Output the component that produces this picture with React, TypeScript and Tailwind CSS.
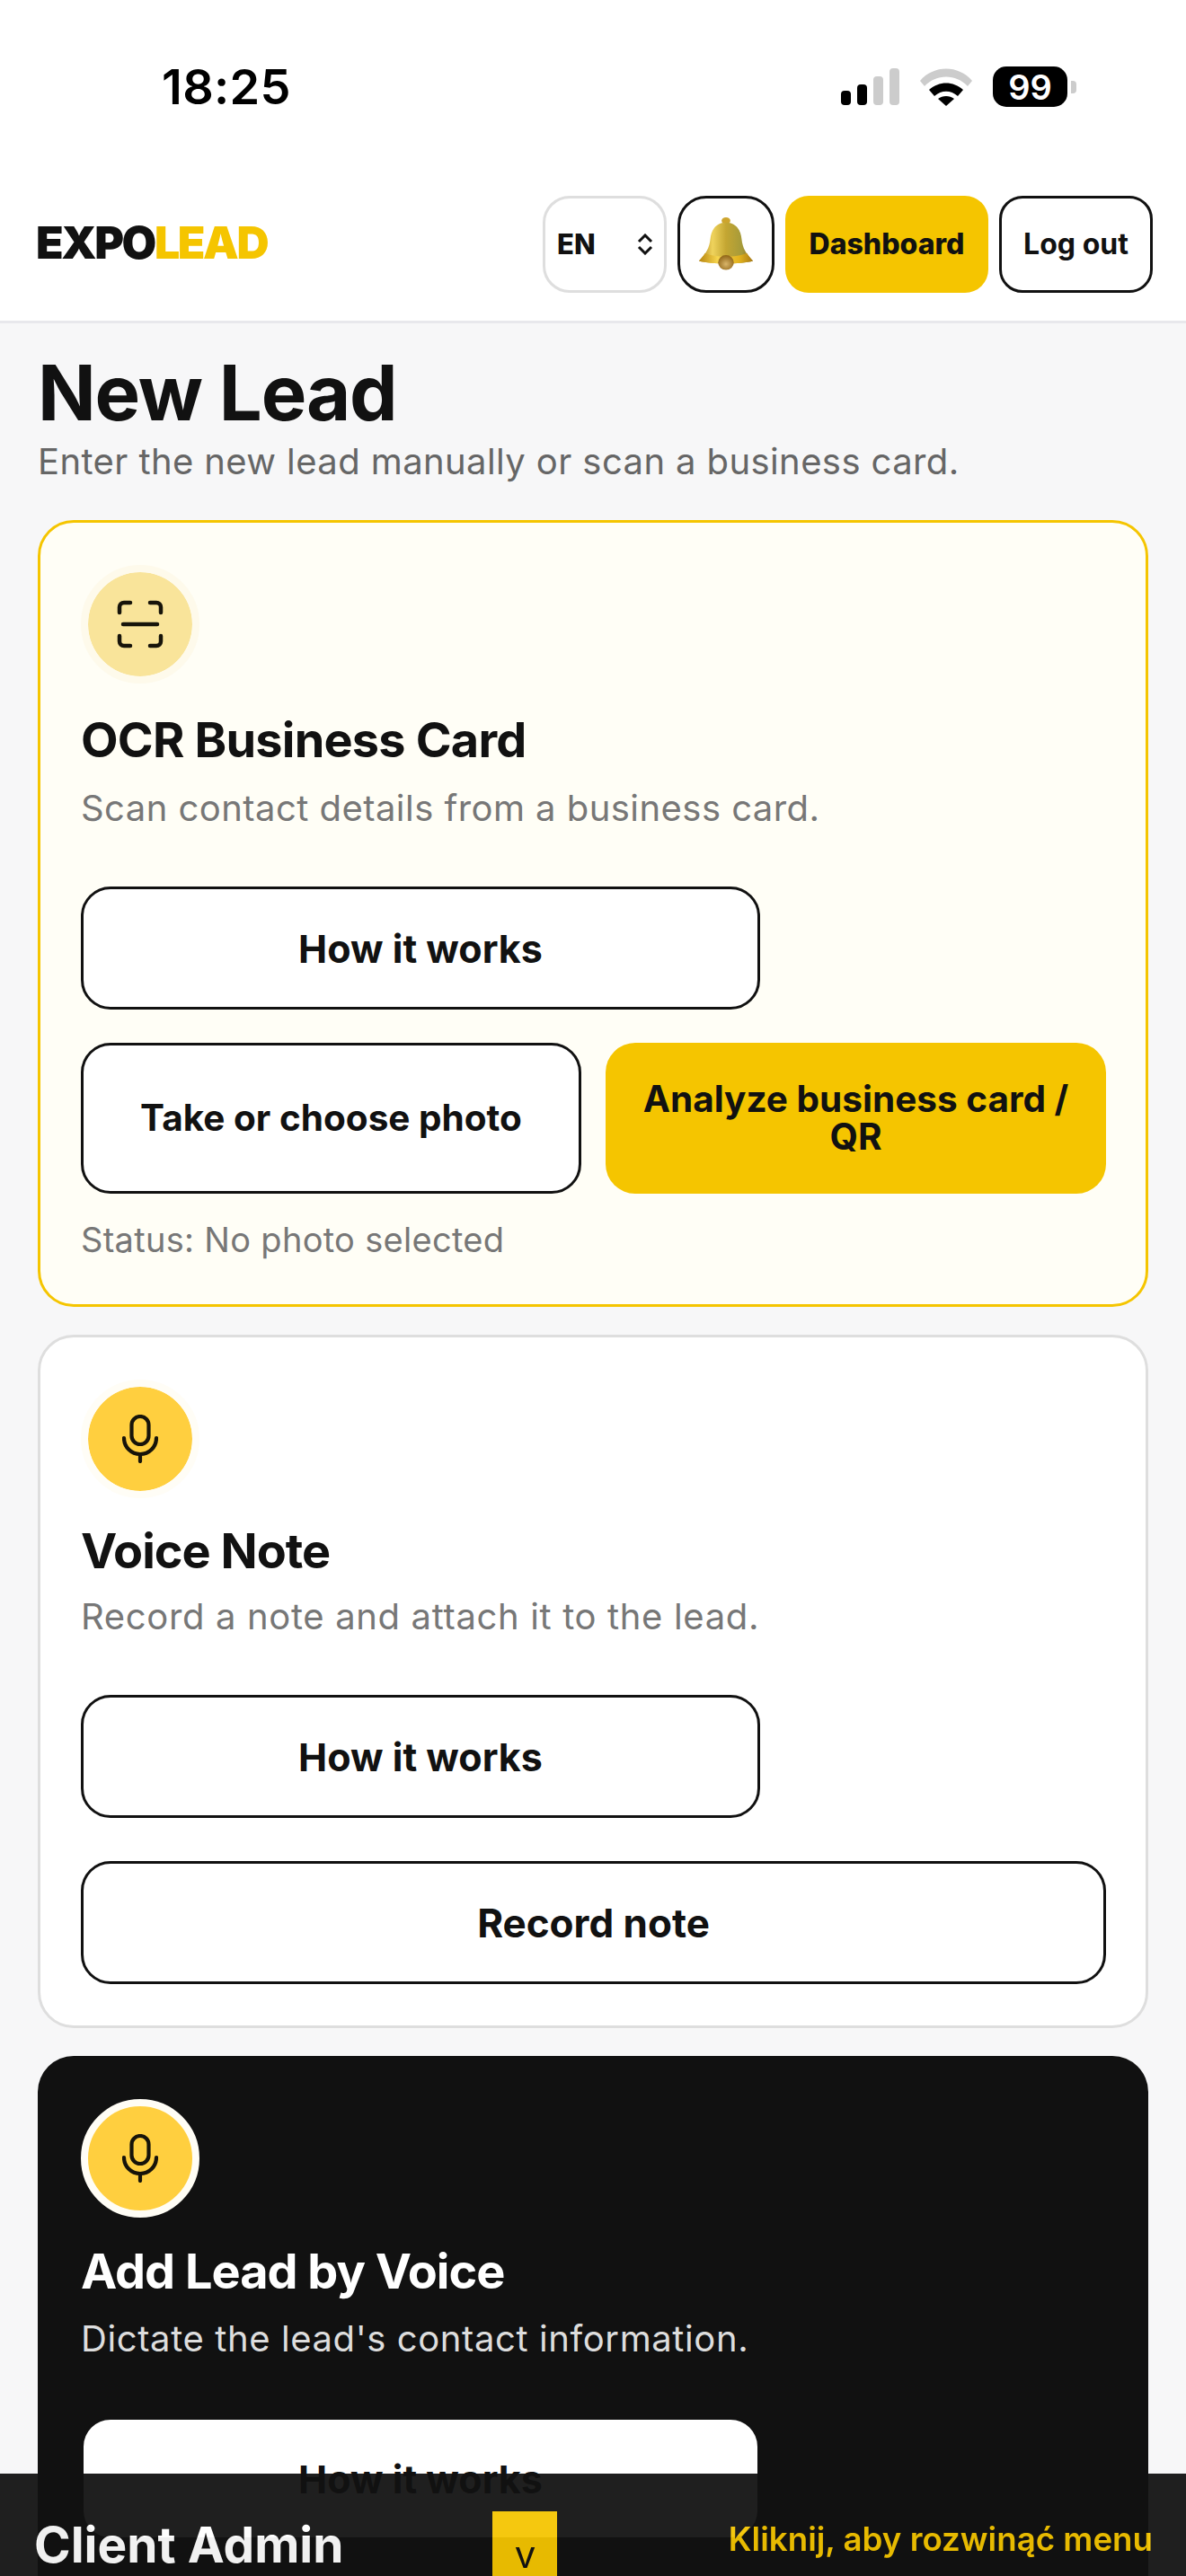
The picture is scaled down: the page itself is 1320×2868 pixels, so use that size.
import React from "react";

const ScanIcon = () => (
  <svg width="52" height="54" viewBox="0 0 52 54" fill="none" stroke="#17140a" strokeWidth="4.5" strokeLinecap="round">
    <path d="M3 14V8a5 5 0 0 1 5-5h7" />
    <path d="M37 3h7a5 5 0 0 1 5 5v6" />
    <path d="M7 27h38" />
    <path d="M3 40v6a5 5 0 0 0 5 5h7" />
    <path d="M49 40v6a5 5 0 0 1-5 5h-7" />
  </svg>
);

const MicIcon = () => (
  <svg width="40" height="54" viewBox="0 0 40 54" fill="none" stroke="#17140a" strokeWidth="4.2" strokeLinecap="round">
    <rect x="10.5" y="2" width="19" height="31" rx="9.5" />
    <path d="M2 26a18 18 0 0 0 36 0" />
    <path d="M20 44v8" />
  </svg>
);

const BellIcon = () => (
  <svg width="62" height="62" viewBox="0 0 64 64">
    <defs>
      <linearGradient id="bellBody" x1="0" y1="0" x2="1" y2="0">
        <stop offset="0" stopColor="#a87c14" />
        <stop offset="0.25" stopColor="#efd35c" />
        <stop offset="0.5" stopColor="#c4a632" />
        <stop offset="0.8" stopColor="#a59a3a" />
        <stop offset="1" stopColor="#86661a" />
      </linearGradient>
      <linearGradient id="bellRim" x1="0" y1="0" x2="1" y2="0">
        <stop offset="0" stopColor="#b8860f" />
        <stop offset="0.35" stopColor="#f7d64e" />
        <stop offset="0.75" stopColor="#e2b21e" />
        <stop offset="1" stopColor="#a87a14" />
      </linearGradient>
      <radialGradient id="bellClapper" cx="0.5" cy="0.6" r="0.6">
        <stop offset="0" stopColor="#d9b56a" />
        <stop offset="1" stopColor="#8f6415" />
      </radialGradient>
    </defs>
    <ellipse cx="32" cy="5" rx="5" ry="4" fill="#cda52e" />
    <path d="M32 7C21 7 15 15 14 26c-1 10-5 17-13 25 7 2 19 3 31 3s24-1 31-3c-8-8-12-15-13-25C49 15 43 7 32 7z" fill="url(#bellBody)" />
    <path d="M1 51c7 2 19 3 31 3s24-1 31-3c-3-3-5-6-7-9-6 3-15 4-24 4s-18-1-24-4c-2 3-4 6-7 9z" fill="url(#bellRim)" />
    <ellipse cx="32" cy="53" rx="9" ry="8.5" fill="url(#bellClapper)" />
  </svg>
);

const SignalIcon = () => (
  <div className="flex items-end gap-[7px]">
    <div className="h-[16px] w-[11px] rounded-[4px] bg-black" />
    <div className="h-[23px] w-[11px] rounded-[4px] bg-black" />
    <div className="h-[32px] w-[11px] rounded-[4px] bg-[#cccccc]" />
    <div className="h-[41px] w-[11px] rounded-[4px] bg-[#cccccc]" />
  </div>
);

const WifiIcon = () => (
  <svg width="58" height="42" viewBox="0 0 58 42">
    <path d="M0 14C15 -4 43 -4 58 14l-5 6C40 6 18 6 5 20z" fill="#cccccc" />
    <path d="M10 24c11-10 27-10 38 0l-6 7c-8-7-18-7-26 0z" fill="#000" />
    <path d="M20 34c5-4 13-4 18 0l-9 8z" fill="#000" />
  </svg>
);

const Outline = "border-[3px] border-[#111111] bg-white text-[#111111]";

function ActionButton({ label, className = "" }: { label: string; className?: string }) {
  return (
    <button className={`flex items-center justify-center rounded-[33px] leading-[50px] font-bold ${className}`}>
      {label}
    </button>
  );
}

export default function App() {
  return (
    <div className="h-[2868px] overflow-hidden bg-[#f7f7f8] font-['Inter',sans-serif] text-[#111111]">
      <div className="flex h-[200px] items-start justify-between bg-white pt-[64px] pr-[122px] pl-[180px]">
        <span className="text-[54px] leading-[66px] font-semibold tracking-[0.3px] text-black">18:25</span>
        <div className="flex items-center pt-[10px]">
          <SignalIcon />
          <div className="mr-[23px] ml-[23px]">
            <WifiIcon />
          </div>
          <div className="flex h-[45px] w-[83px] items-center justify-center rounded-[15px] bg-black text-[38px] leading-none font-semibold text-white">
            99
          </div>
          <div className="ml-[4px] h-[14px] w-[6px] rounded-r-[4px] bg-[#cccccc]" />
        </div>
      </div>

      <header className="flex h-[160px] items-start justify-between border-b-[3px] border-[#e8e8ec] bg-white pt-[18px] pr-[37px] pl-[40px]">
        <div className="mt-[24px] text-[50px] leading-[56px] font-black tracking-[-2.4px]">
          EXPO<span className="text-[#f5c500]">LEAD</span>
        </div>
        <div className="flex items-center gap-[12px]">
          <div className="flex h-[108px] w-[138px] items-center justify-between rounded-[30px] border-[3px] border-[#dedede] bg-white pr-[12px] pl-[13px] text-[31px] font-extrabold">
            EN
            <svg width="18" height="24" viewBox="0 0 18 24" fill="none" stroke="#111" strokeWidth="3">
              <path d="M2 9l7-7 7 7" />
              <path d="M2 15l7 7 7-7" />
            </svg>
          </div>
          <button className={`flex h-[108px] w-[108px] items-center justify-center rounded-[32px] ${Outline}`}>
            <BellIcon />
          </button>
          <button className="h-[108px] w-[226px] rounded-[26px] bg-[#f5c500] text-[32px] font-extrabold">Dashboard</button>
          <button className={`h-[108px] w-[171px] rounded-[26px] text-[32px] font-bold ${Outline}`}>Log out</button>
        </div>
      </header>

      <main className="px-[42px]">
        <h1 className="mt-[28px] text-[85px] leading-[100px] font-bold tracking-[-1.2px]">New Lead</h1>
        <p className="mt-[2px] text-[40px] leading-[48px] tracking-[0.4px] text-[#666666]">Enter the new lead manually or scan a business card.</p>

        <section className="mt-[41px] h-[876px] rounded-[40px] border-[3px] border-[#f5c500] bg-[#fffef6] pt-[47px] pr-[44px] pl-[45px]">
          <div className="flex h-[132px] w-[132px] items-center justify-center rounded-full border-[8px] border-[#fefaeb] bg-[#f9e49a] bg-clip-padding">
            <ScanIcon />
          </div>
          <h2 className="mt-[30px] text-[54px] leading-[66px] font-bold tracking-[-0.8px]">OCR Business Card</h2>
          <p className="mt-[19px] text-[40px] leading-[48px] tracking-[0.45px] text-[#777777]">Scan contact details from a business card.</p>
          <ActionButton label="How it works" className={`mt-[63px] h-[137px] w-[756px] text-[43px] ${Outline}`} />
          <div className="mt-[37px] grid grid-cols-2 gap-[27px]">
            <ActionButton label="Take or choose photo" className={`h-[168px] text-[40.5px] ${Outline}`} />
            <button className="h-[168px] rounded-[33px] bg-[#f5c500] px-[30px] text-[40.5px] leading-[42px] font-bold">
              Analyze business card / QR
            </button>
          </div>
          <p className="mt-[28px] text-[38px] leading-[46px] tracking-[0.3px] text-[#777777]">Status: No photo selected</p>
        </section>

        <section className="mt-[31px] h-[772px] rounded-[40px] border-[3px] border-[#dedede] bg-white pt-[47px] pr-[44px] pl-[45px]">
          <div className="flex h-[132px] w-[132px] items-center justify-center rounded-full border-[8px] border-[#fffdf6] bg-[#ffcf3f] bg-clip-padding">
            <MicIcon />
          </div>
          <h2 className="mt-[26px] text-[54px] leading-[66px] font-bold tracking-[-1px]">Voice Note</h2>
          <p className="mt-[16px] text-[40px] leading-[48px] tracking-[0.65px] text-[#777777]">Record a note and attach it to the lead.</p>
          <ActionButton label="How it works" className={`mt-[63px] h-[137px] w-[756px] text-[43px] ${Outline}`} />
          <ActionButton label="Record note" className={`mt-[48px] h-[137px] w-full text-[44px] ${Outline}`} />
        </section>

        <section className="mt-[31px] h-[700px] rounded-[40px] bg-[#111111] pt-[48px] pr-[47px] pl-[48px] text-white">
          <div className="flex h-[132px] w-[132px] items-center justify-center rounded-full border-[8px] border-[#fffdf5] bg-[#ffcf3f]">
            <MicIcon />
          </div>
          <h2 className="mt-[27px] text-[54px] leading-[66px] font-bold tracking-[-1px]">Add Lead by Voice</h2>
          <p className="mt-[18px] text-[40px] leading-[48px] tracking-[0.6px] text-[#dddddd]">Dictate the lead's contact information.</p>
          <ActionButton label="How it works" className="mt-[63px] h-[137px] w-[756px] border-[3px] border-[#111111] bg-white text-[43px] text-[#111111]" />
        </section>
      </main>

      <div className="fixed right-0 bottom-0 left-0 flex h-[114px] items-end justify-between bg-[#111111] pr-[37px] pl-[38px] opacity-[0.94]">
        <span className="mb-[1px] text-[55px] leading-[68px] font-bold text-white">Client Admin</span>
        <div className="ml-[166px] flex h-[72px] w-[72px] items-end justify-center bg-[#f5c500] pb-[2px] text-[42px] leading-[44px] text-[#111111]">v</div>
        <span className="mb-[18px] ml-auto text-[36.7px] leading-[46px] font-semibold text-[#f5c500]">Kliknij, aby rozwinąć menu</span>
      </div>
    </div>
  );
}
